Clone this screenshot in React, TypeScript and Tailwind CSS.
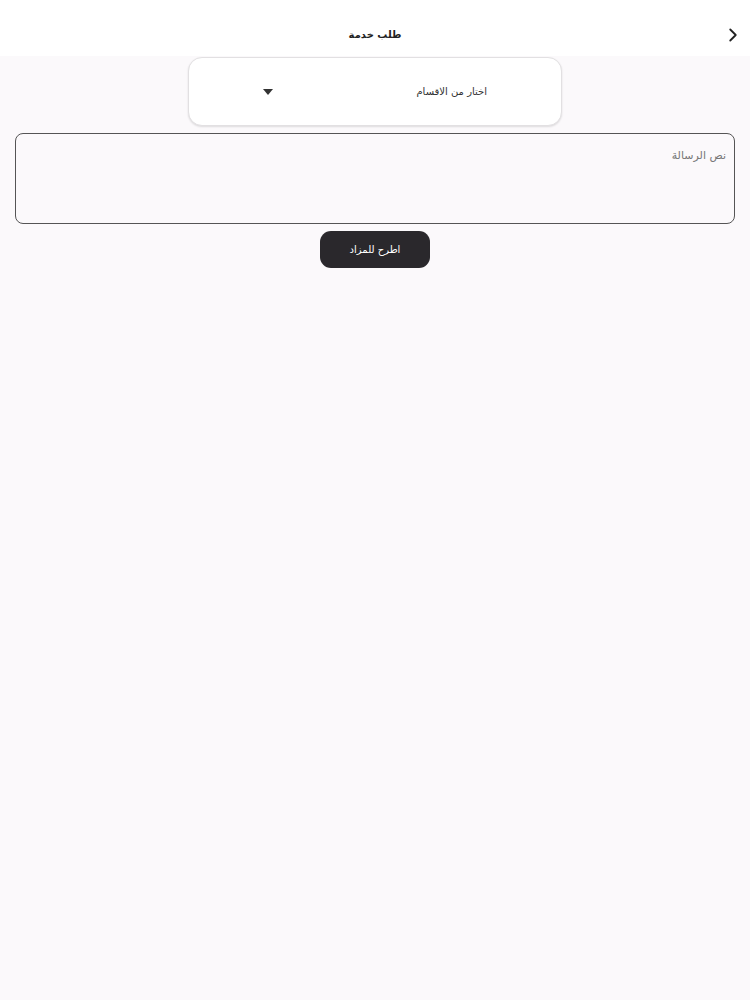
import { ChevronRight } from "lucide-react";

const font = { fontFamily: '"DejaVu Sans", "Noto Sans", sans-serif' };

export default function App() {
  return (
    <div dir="rtl" style={font} className="min-h-[1000px] w-[750px] bg-[#fbf9fb] text-[#222]">
      {/* Header */}
      <header className="relative flex h-[56px] items-center justify-center bg-white">
        <ChevronRight
          size={22}
          strokeWidth={2}
          className="absolute right-[6px] top-[24px] text-[#222]"
        />
        <h1 className="mt-[13px] text-[10px] font-bold">طلب خدمة</h1>
      </header>

      {/* Category select */}
      <div className="flex justify-center">
        <button
          type="button"
          className="mt-[1px] flex h-[69px] w-[374px] items-center justify-between rounded-[14px] border border-[#e2e0e2] bg-white px-[74px] shadow-[0_1px_2px_rgba(0,0,0,0.12)]"
        >
          <span className="whitespace-nowrap text-[10px] text-[#333]">اختار من الاقسام</span>
          <svg width="10" height="6" viewBox="0 0 10 6">
            <path d="M0 0h10L5 6z" fill="#333" />
          </svg>
        </button>
      </div>

      {/* Message box */}
      <div className="mx-[15px] mt-[7px] h-[91px] rounded-[8px] border border-[#555] px-[8px] pt-[8px]">
        <span className="text-[11px] text-[#777]">نص الرسالة</span>
      </div>

      {/* Submit */}
      <div className="mt-[7px] flex justify-center">
        <button
          type="button"
          className="flex h-[37px] w-[110px] items-center justify-center rounded-[11px] bg-[#2a282c] text-[10px] text-white"
        >
          اطرح للمزاد
        </button>
      </div>
    </div>
  );
}
